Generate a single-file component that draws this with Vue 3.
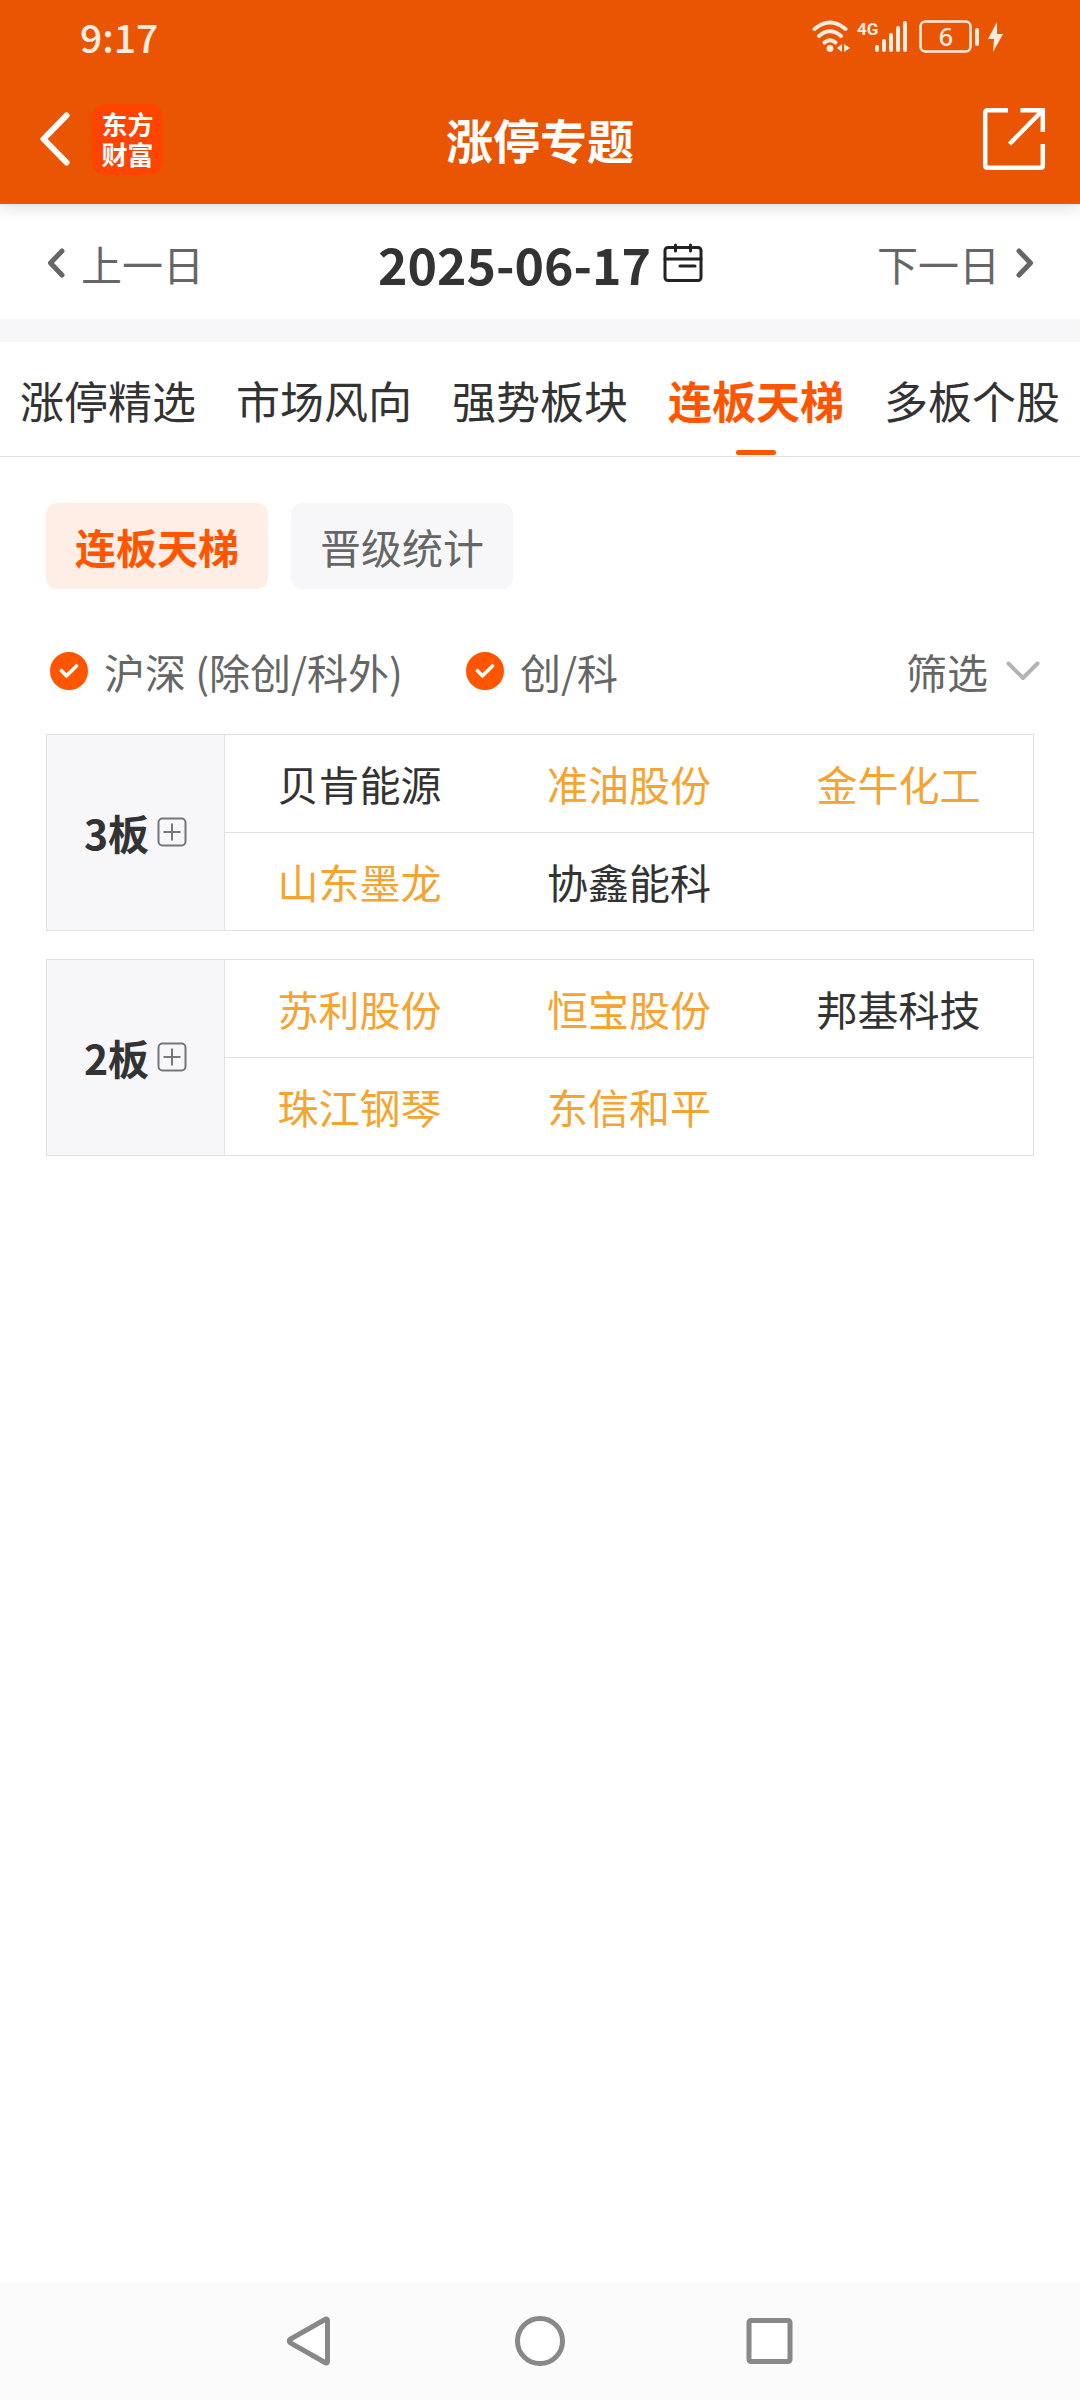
<script setup>
import { ref } from 'vue'

const tabs = ['涨停精选', '市场风向', '强势板块', '连板天梯', '多板个股']
const activeTab = ref('连板天梯')

const views = ['连板天梯', '晋级统计']
const activeView = ref('连板天梯')

const mainBoard = ref(true)
const growthBoard = ref(true)

const ladders = [
  {
    level: '3板',
    rows: [
      [{ name: '贝肯能源' }, { name: '准油股份', hot: true }, { name: '金牛化工', hot: true }],
      [{ name: '山东墨龙', hot: true }, { name: '协鑫能科' }, null],
    ],
  },
  {
    level: '2板',
    rows: [
      [{ name: '苏利股份', hot: true }, { name: '恒宝股份', hot: true }, { name: '邦基科技' }],
      [{ name: '珠江钢琴', hot: true }, { name: '东信和平', hot: true }, null],
    ],
  },
]
</script>

<template>
  <div class="page">
    <header class="top">
      <div class="status">
        <span class="time">9:17</span>
        <svg class="status-icons" width="192" height="36" viewBox="0 0 192 36" aria-hidden="true">
          <g fill="none" stroke="#ffece0" stroke-width="4" stroke-linecap="round">
            <path d="M2.500 11Q18 -2 33.500 11" />
            <path d="M7 18Q18 8.500 29 18" />
            <path d="M12.500 24.500Q18 20 23.500 24.500" />
          </g>
          <g fill="#ffece0">
            <circle cx="18" cy="30.500" r="3.400" />
            <path d="M30 26v8l-5-4zM32 26v8l6-4z" />
            <rect x="63" y="27" width="4" height="7" rx="2" />
            <rect x="70" y="21" width="4" height="13" rx="2" />
            <rect x="77" y="15" width="4" height="19" rx="2" />
            <rect x="84" y="8" width="4" height="26" rx="2" />
            <rect x="91" y="3" width="4" height="31" rx="2" />
            <rect x="163" y="10" width="4" height="18" rx="2" />
            <path d="M185 4l-9 17h6l-1 13 10-18h-6z" />
            <text x="45" y="17" class="net">4G</text>
            <text x="134" y="28" class="charge" text-anchor="middle">6</text>
          </g>
          <rect x="108.500" y="3.500" width="50" height="30" rx="5" fill="none" stroke="#ffece0" stroke-width="2.500" />
        </svg>
      </div>
      <div class="bar">
        <div class="bar-left">
          <button class="plain" type="button" aria-label="返回">
            <svg width="30" height="54" viewBox="0 0 30 54">
              <path d="M26.500 3.500L3.500 27l23 23.500" fill="none" stroke="#fff" stroke-width="6" stroke-linecap="round" stroke-linejoin="round" />
            </svg>
          </button>
          <a class="logo" href="#">东方<br />财富</a>
        </div>
        <h1>涨停专题</h1>
        <button class="plain share" type="button" aria-label="分享">
          <svg width="64" height="64" viewBox="0 0 64 64" fill="none" stroke="#fff" stroke-width="4.500">
            <path d="M26 3.200H5.500Q3.200 3.200 3.200 5.500v53q0 2.300 2.300 2.300h53q2.300 0 2.300-2.300V37" />
            <path d="M38.500 3.200h22.300V25M60 4L27.500 37" />
          </svg>
        </button>
      </div>
    </header>

    <nav class="dates" aria-label="日期">
      <button class="plain day" type="button">
        <svg width="18" height="30" viewBox="0 0 18 30"><path d="M15 3L3.500 15 15 27" /></svg>
        上一日
      </button>
      <button class="plain date" type="button">
        2025-06-17
        <svg width="40" height="40" viewBox="0 0 40 40" fill="none" stroke="#222" stroke-width="3" stroke-linecap="round">
          <rect x="2" y="4.500" width="36" height="33" rx="3" />
          <path d="M2 16h36M12.500 2v6M27.500 2v6M17 23h15" />
        </svg>
      </button>
      <button class="plain day" type="button">
        下一日
        <svg width="18" height="30" viewBox="0 0 18 30"><path d="M3 3l11.500 12L3 27" /></svg>
      </button>
    </nav>

    <nav class="tabs" aria-label="专题栏目">
      <button
        v-for="tab in tabs"
        :key="tab"
        type="button"
        class="plain tab"
        :class="{ active: tab === activeTab }"
        @click="activeTab = tab"
      >{{ tab }}</button>
    </nav>

    <main>
      <div class="chips">
        <button
          v-for="view in views"
          :key="view"
          type="button"
          class="plain chip"
          :class="{ active: view === activeView }"
          @click="activeView = view"
        >{{ view }}</button>
      </div>

      <div class="filters">
        <label><input v-model="mainBoard" type="checkbox" />沪深 (除创/科外)</label>
        <label><input v-model="growthBoard" type="checkbox" />创/科</label>
        <button class="plain filter" type="button">
          筛选
          <svg width="34" height="20" viewBox="0 0 34 20" fill="none" stroke="#b3b3b3" stroke-width="4" stroke-linecap="round" stroke-linejoin="round">
            <path d="M2.500 2.500L17 17 31.500 2.500" />
          </svg>
        </button>
      </div>

      <table v-for="group in ladders" :key="group.level">
        <tbody>
          <tr v-for="(row, i) in group.rows" :key="i">
            <th v-if="i === 0" :rowspan="group.rows.length" scope="rowgroup">
              <div class="level">
                {{ group.level }}
                <button class="plain" type="button" :aria-label="group.level + '展开'">
                  <svg width="30" height="30" viewBox="0 0 30 30" fill="none" stroke="#777" stroke-width="2">
                    <rect x="1.500" y="1.500" width="27" height="27" rx="4" />
                    <path d="M6.500 15h17M15 6.500v17" />
                  </svg>
                </button>
              </div>
            </th>
            <td v-for="(stock, j) in row" :key="j">
              <a v-if="stock" href="#" :class="{ hot: stock.hot }">{{ stock.name }}</a>
            </td>
          </tr>
        </tbody>
      </table>
    </main>

    <footer>
      <button class="plain" type="button" aria-label="后退">
        <svg width="50" height="52" viewBox="0 0 50 52"><path d="M42.500 5.500v41Q42.500 49 40 47.500L5.500 28Q3 26 5.500 24L40 4.500Q42.500 3 42.500 5.500z" /></svg>
      </button>
      <button class="plain" type="button" aria-label="主屏幕">
        <svg width="50" height="52" viewBox="0 0 50 52"><circle cx="25" cy="26" r="22.500" /></svg>
      </button>
      <button class="plain" type="button" aria-label="最近任务">
        <svg width="50" height="52" viewBox="0 0 50 52"><rect x="4" y="5.500" width="41" height="41" rx="2" /></svg>
      </button>
    </footer>
  </div>
</template>

<style>
body {
  margin: 0;
  background: #fff;
}
</style>

<style scoped>
.page {
  display: flex;
  flex-direction: column;
  min-height: 100vh;
  font-family: "Noto Sans CJK SC", "Noto Sans", sans-serif;
  font-size: 41px;
  line-height: 60px;
  color: #333;
}

svg {
  display: block;
  flex: none;
}

.plain {
  padding: 0;
  border: 0;
  background: none;
  font: inherit;
  color: inherit;
  white-space: nowrap;
}

.top {
  position: relative;
  background: #ea5504;
  color: #fff;
  box-shadow: 0 2px 16px rgba(0, 0, 0, 0.16);
}

.status {
  display: flex;
  justify-content: space-between;
  align-items: center;
  height: 72px;
  padding: 0 76px 0 80px;
  color: #ffece0;
}

.time {
  font-size: 39px;
  font-weight: 500;
}

.net {
  font: 700 17px "Roboto", sans-serif;
}

.charge {
  font: 500 25px "Noto Sans", sans-serif;
}

.bar {
  display: grid;
  grid-template-columns: 1fr auto 1fr;
  align-items: center;
  height: 132px;
  padding: 2px 34px 0;
  box-sizing: border-box;
}

.bar-left {
  display: flex;
  align-items: center;
  gap: 22px;
  padding-left: 6px;
}

.logo {
  width: 71px;
  padding: 5px 0 6px;
  border-radius: 14px;
  background: #ff4400;
  color: #fff;
  font-size: 26px;
  font-weight: 700;
  line-height: 30px;
  text-align: center;
  text-decoration: none;
}

h1 {
  margin: 0;
  font-size: 47px;
  font-weight: 700;
}

.share {
  justify-self: end;
}

.dates {
  display: flex;
  justify-content: space-between;
  align-items: center;
  height: 113px;
  padding: 2px 46px 0 47px;
  border-bottom: 23px solid #f7f7fa;
}

.day,
.date,
.filter {
  display: flex;
  align-items: center;
}

.day {
  gap: 16px;
  color: #666;
}

.day path {
  fill: none;
  stroke: #666;
  stroke-width: 5;
  stroke-linecap: round;
  stroke-linejoin: round;
}

.date {
  gap: 12px;
  font-size: 50px;
  font-weight: 700;
}

.tabs {
  display: flex;
  justify-content: space-between;
  padding: 0 20px;
  border-bottom: 1px solid #e1e1e1;
}

.tab {
  position: relative;
  padding-top: 2px;
  font-size: 44px;
  line-height: 112px;
}

.tab.active {
  color: #ff5500;
  font-weight: 700;
}

.tab.active::after {
  content: "";
  position: absolute;
  left: 50%;
  bottom: 1px;
  width: 40px;
  height: 5px;
  margin-left: -20px;
  border-radius: 3px;
  background: #ff5500;
}

main {
  flex: 1;
  padding: 46px;
}

.chips {
  display: flex;
  gap: 23px;
}

.chip {
  padding: 0 29px;
  border-radius: 11px;
  background: #f7f7fa;
  color: #666;
  line-height: 86px;
}

.chip.active {
  background: #ffeee6;
  color: #ff5500;
  font-weight: 700;
}

.filters {
  display: flex;
  align-items: center;
  gap: 63px;
  margin: 52px -6px 33px 4px;
  color: #666;
}

.filters label {
  display: flex;
  align-items: center;
  gap: 16px;
  white-space: nowrap;
}

.filters input {
  appearance: none;
  width: 38px;
  height: 38px;
  margin: 0;
  border: 2px solid #bbb;
  border-radius: 50%;
}

.filters input:checked {
  display: grid;
  place-items: center;
  border-color: #ff5500;
  background: #ff5500;
}

.filters input:checked::after {
  content: "";
  width: 14px;
  height: 7px;
  margin-bottom: 5px;
  border: solid #fff;
  border-width: 0 0 4px 4px;
  border-radius: 2px;
  transform: rotate(-45deg);
}

.filter {
  gap: 18px;
  margin-left: auto;
}

table {
  width: 100%;
  margin-bottom: 28px;
  border-collapse: collapse;
  table-layout: fixed;
}

th,
td {
  height: 95px;
  padding: 0 0 2px;
  border: 1px solid #e1e1e1;
  text-align: center;
}

th {
  width: 177px;
  background: #f7f7fa;
}

td {
  border-right-width: 0;
  border-left-width: 0;
}

td:last-child {
  border-right-width: 1px;
}

td a {
  color: #333;
  text-decoration: none;
}

td a.hot {
  color: #f5a432;
}

.level {
  display: flex;
  justify-content: center;
  align-items: center;
  gap: 8px;
}

footer {
  display: flex;
  justify-content: center;
  align-items: center;
  gap: 180px;
  height: 118px;
  background: #fbfbfb;
}

footer svg {
  fill: #fff;
  stroke: #888;
  stroke-width: 5;
}
</style>
